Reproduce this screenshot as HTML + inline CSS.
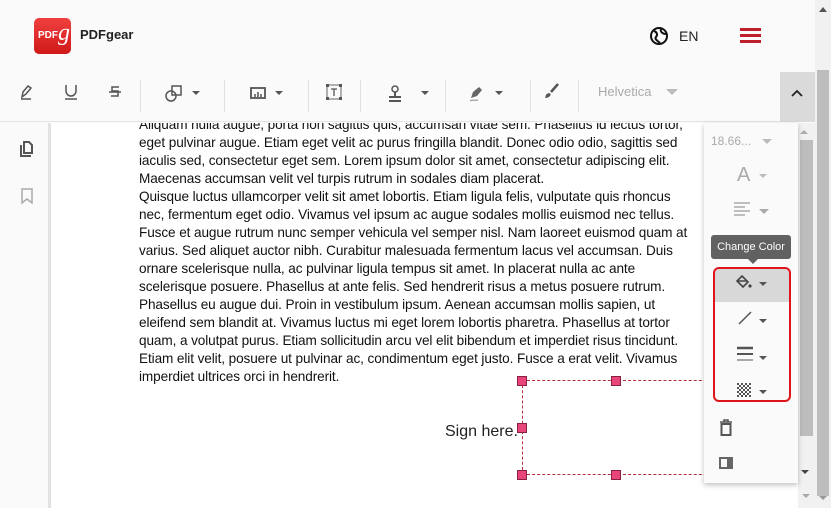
<!DOCTYPE html>
<html><head><meta charset="utf-8"><style>
*{box-sizing:border-box;margin:0;padding:0}
body{width:831px;height:508px;overflow:hidden;background:#fafafa;font-family:"Liberation Sans",sans-serif;position:relative}
.abs{position:absolute}
.txt{position:absolute;left:139px;top:116px;font-size:13.6px;line-height:18px;color:#111;white-space:nowrap;letter-spacing:-0.1px}
.caret{position:absolute;width:0;height:0;border-left:4px solid transparent;border-right:4px solid transparent;border-top:4px solid #555}
.sep{position:absolute;top:80px;width:1px;height:32px;background:#e0e0e0}
.h{position:absolute;width:10px;height:10px;background:#e8457a;border:1px solid #8a2040}
</style></head><body>
<div class="abs" style="left:0;top:0;width:815px;height:72px;background:#fafafa"></div>
<div class="abs" style="left:34px;top:18px;width:37px;height:36px;border-radius:5px;background:linear-gradient(#f04040,#d01818)"></div>
<div class="abs" style="left:38px;top:30px;color:#fff;font-size:10px;font-weight:bold">PDF</div>
<div class="abs" style="left:58px;top:20px;color:#fff;font-size:24px;font-style:italic;font-family:'Liberation Serif',serif">g</div>
<div class="abs" style="left:80px;top:27px;font-size:13px;font-weight:bold;color:#222">PDFgear</div>
<svg class="abs" style="left:649px;top:26px" width="20" height="20" viewBox="0 0 20 20"><circle cx="10" cy="10" r="8" fill="none" stroke="#111" stroke-width="2"/><path d="M5 5c3 1 4 4 2 6s2 4 4 6M12 3c-1 3 2 5 5 5" fill="none" stroke="#111" stroke-width="2"/></svg>
<div class="abs" style="left:679px;top:28px;font-size:14px;color:#222">EN</div>
<div class="abs" style="left:740px;top:28px;width:21px;height:3px;background:#c0202c"></div>
<div class="abs" style="left:740px;top:34px;width:21px;height:3px;background:#c0202c"></div>
<div class="abs" style="left:740px;top:40px;width:21px;height:3px;background:#c0202c"></div>
<div class="abs" style="left:0;top:72px;width:815px;height:50px;background:#fafafa;border-bottom:1px solid #e4e4e4"></div>
<svg class="abs" style="left:18px;top:83px" width="18" height="18" viewBox="0 0 18 18"><path d="M4 14l1-5 5-6 3 2-5 6z" fill="none" stroke="#555" stroke-width="1.5"/><path d="M3 16h10" stroke="#555" stroke-width="1.5"/></svg>
<svg class="abs" style="left:62px;top:83px" width="18" height="18" viewBox="0 0 18 18"><path d="M4 2v6a5 5 0 0 0 10 0V2" fill="none" stroke="#555" stroke-width="1.5"/><path d="M3 16h12" stroke="#555" stroke-width="1.5"/></svg>
<svg class="abs" style="left:106px;top:83px" width="18" height="18" viewBox="0 0 18 18"><path d="M13 4H6v4h6v5H5" fill="none" stroke="#555" stroke-width="1.5"/><path d="M3 9h12" stroke="#555" stroke-width="1.5"/></svg>
<div class="sep" style="left:140px"></div>
<svg class="abs" style="left:164px;top:83px" width="20" height="20" viewBox="0 0 20 20"><circle cx="7" cy="13" r="5" fill="none" stroke="#555" stroke-width="1.5"/><rect x="8" y="3" width="9" height="9" fill="none" stroke="#555" stroke-width="1.5"/></svg>
<div class="caret" style="left:192px;top:91px"></div>
<div class="sep" style="left:224px"></div>
<svg class="abs" style="left:249px;top:85px" width="18" height="16" viewBox="0 0 18 16"><rect x="2" y="3" width="14" height="10" fill="none" stroke="#555" stroke-width="1.8"/><path d="M6 12V9M9 12V7M12 12V9" stroke="#555" stroke-width="1.5"/></svg>
<div class="caret" style="left:275px;top:91px"></div>
<div class="sep" style="left:308px"></div>
<svg class="abs" style="left:324px;top:82px" width="20" height="20" viewBox="0 0 20 20"><rect x="3" y="3" width="14" height="14" fill="none" stroke="#666" stroke-width="1"/><path d="M7 7h6M10 7v7" stroke="#555" stroke-width="1.3"/><rect x="2" y="2" width="3" height="3" fill="#555"/><rect x="15" y="2" width="3" height="3" fill="#555"/><rect x="2" y="15" width="3" height="3" fill="#555"/><rect x="15" y="15" width="3" height="3" fill="#555"/></svg>
<div class="sep" style="left:360px"></div>
<svg class="abs" style="left:385px;top:83px" width="20" height="20" viewBox="0 0 20 20"><circle cx="10" cy="6" r="3" fill="none" stroke="#555" stroke-width="1.5"/><path d="M10 9v4M4 14h12M4 18h12" stroke="#555" stroke-width="2"/></svg>
<div class="caret" style="left:421px;top:91px"></div>
<div class="sep" style="left:445px"></div>
<svg class="abs" style="left:467px;top:83px" width="20" height="20" viewBox="0 0 20 20"><path d="M4 15l2-6 6-5 3 3-5 6z" fill="#666"/><path d="M3 18c3-2 5 0 8-1" fill="none" stroke="#888" stroke-width="1"/></svg>
<div class="caret" style="left:495px;top:91px"></div>
<div class="sep" style="left:530px"></div>
<svg class="abs" style="left:543px;top:82px" width="18" height="18" viewBox="0 0 18 18"><path d="M15 2L8 10" stroke="#555" stroke-width="2.5"/><path d="M4 12c2-2 5 0 3 2s-4 2-5 2c1-1 0-3 2-4z" fill="#555"/></svg>
<div class="sep" style="left:578px"></div>
<div class="abs" style="left:598px;top:84px;font-size:13px;color:#aaa">Helvetica</div>
<div class="caret" style="left:666px;top:89px;border-left-width:6px;border-right-width:6px;border-top:6px solid #bbb"></div>
<div class="abs" style="left:780px;top:72px;width:35px;height:50px;background:#dadada"></div>
<svg class="abs" style="left:790px;top:88px" width="14" height="10" viewBox="0 0 14 10"><path d="M2 8l5-5 5 5" fill="none" stroke="#222" stroke-width="1.8"/></svg>
<div class="abs" style="left:0;top:123px;width:48px;height:385px;background:#fafafa"></div>
<div class="abs" style="left:48px;top:123px;width:3px;height:385px;background:#e2e2e2"></div>
<svg class="abs" style="left:18px;top:140px" width="18" height="18" viewBox="0 0 18 18"><path d="M3 5v11h10" fill="none" stroke="#555" stroke-width="2"/><path d="M6 2h5l3 3v8H6z" fill="none" stroke="#555" stroke-width="2"/></svg>
<svg class="abs" style="left:19px;top:187px" width="16" height="18" viewBox="0 0 16 18"><path d="M3 2h10v14l-5-4-5 4z" fill="none" stroke="#aaa" stroke-width="1.5"/></svg>
<div class="abs" style="left:51px;top:123px;width:747px;height:385px;background:#fff;overflow:hidden">
<div class="txt" style="left:88px;top:-7px">
<div>Aliquam nulla augue, porta non sagittis quis, accumsan vitae sem. Phasellus id lectus tortor,</div>
<div>eget pulvinar augue. Etiam eget velit ac purus fringilla blandit. Donec odio odio, sagittis sed</div>
<div>iaculis sed, consectetur eget sem. Lorem ipsum dolor sit amet, consectetur adipiscing elit.</div>
<div>Maecenas accumsan velit vel turpis rutrum in sodales diam placerat.</div>
<div>Quisque luctus ullamcorper velit sit amet lobortis. Etiam ligula felis, vulputate quis rhoncus</div>
<div>nec, fermentum eget odio. Vivamus vel ipsum ac augue sodales mollis euismod nec tellus.</div>
<div>Fusce et augue rutrum nunc semper vehicula vel semper nisl. Nam laoreet euismod quam at</div>
<div>varius. Sed aliquet auctor nibh. Curabitur malesuada fermentum lacus vel accumsan. Duis</div>
<div>ornare scelerisque nulla, ac pulvinar ligula tempus sit amet. In placerat nulla ac ante</div>
<div>scelerisque posuere. Phasellus at ante felis. Sed hendrerit risus a metus posuere rutrum.</div>
<div>Phasellus eu augue dui. Proin in vestibulum ipsum. Aenean accumsan mollis sapien, ut</div>
<div>eleifend sem blandit at. Vivamus luctus mi eget lorem lobortis pharetra. Phasellus at tortor</div>
<div>quam, a volutpat purus. Etiam sollicitudin arcu vel elit bibendum et imperdiet risus tincidunt.</div>
<div>Etiam elit velit, posuere ut pulvinar ac, condimentum eget justo. Fusce a erat velit. Vivamus</div>
<div>imperdiet ultrices orci in hendrerit.</div>
</div>
</div>
<div class="abs" style="left:445px;top:423px;font-size:16px;color:#222">Sign here.</div>
<div class="abs" style="left:522px;top:380px;width:200px;height:95px;border:1px dashed #b03040"></div>
<div class="h" style="left:517px;top:376px"></div>
<div class="h" style="left:611px;top:376px"></div>
<div class="h" style="left:517px;top:423px"></div>
<div class="h" style="left:517px;top:470px"></div>
<div class="h" style="left:611px;top:470px"></div>
<div class="abs" style="left:798px;top:123px;width:17px;height:385px;background:#f1f1f1"></div>
<div class="abs" style="left:800px;top:140px;width:13px;height:296px;background:#bdbdbd"></div>
<div class="caret" style="left:802px;top:494px;border-top-color:#aaa"></div>
<div class="abs" style="left:815px;top:0;width:16px;height:508px;background:#f1f1f1"></div>
<div class="abs" style="left:817px;top:70px;width:12px;height:426px;background:#bdbdbd"></div>
<div class="abs" style="left:819px;top:7px;width:0;height:0;border-left:4px solid transparent;border-right:4px solid transparent;border-bottom:5px solid #555"></div>
<div class="caret" style="left:819px;top:496px;border-top-color:#999"></div>
<div class="abs" style="left:704px;top:123px;width:94px;height:360px;background:#fafafa;box-shadow:0 2px 5px rgba(0,0,0,.25)"></div>
<div class="abs" style="left:800px;top:130px;width:0;height:0;border-left:4px solid transparent;border-right:4px solid transparent;border-bottom:4px solid #aaa"></div>
<div class="caret" style="left:801px;top:470px;border-top-color:#444"></div>
<div class="abs" style="left:711px;top:134px;font-size:12px;color:#aaa">18.66...</div>
<div class="caret" style="left:762px;top:139px;border-left-width:5px;border-right-width:5px;border-top:5px solid #bbb"></div>
<div class="abs" style="left:737px;top:164px;font-size:20px;color:#aaa">A</div>
<div class="caret" style="left:759px;top:174px;border-top-color:#bbb"></div>
<svg class="abs" style="left:733px;top:201px" width="18" height="16" viewBox="0 0 18 16"><path d="M1 2h16M1 6h11M1 10h16M1 14h11" stroke="#aaa" stroke-width="1.6"/></svg>
<div class="caret" style="left:759px;top:209px;border-left-width:5px;border-right-width:5px;border-top:5px solid #aaa"></div>
<div class="abs" style="left:711px;top:235px;width:80px;height:24px;background:#616161;border-radius:3px;color:#fff;font-size:11px;line-height:24px;text-align:center">Change Color</div>
<div class="abs" style="left:748px;top:259px;width:0;height:0;border-left:5px solid transparent;border-right:5px solid transparent;border-top:5px solid #616161"></div>
<div class="abs" style="left:713px;top:268px;width:77px;height:34px;background:#d8d8d8;border-radius:6px 6px 0 0"></div>
<div class="abs" style="left:713px;top:267px;width:78px;height:135px;border:2px solid #e0151c;border-radius:6px"></div>
<svg class="abs" style="left:735px;top:274px" width="18" height="16" viewBox="0 0 18 16"><path d="M7 2l6 6-5 5-6-6z" fill="none" stroke="#444" stroke-width="1.6"/><path d="M3 7h9" stroke="#444" stroke-width="1.5"/><circle cx="15" cy="12" r="1.6" fill="#444"/></svg>
<div class="caret" style="left:759px;top:282px"></div>
<svg class="abs" style="left:737px;top:310px" width="16" height="16" viewBox="0 0 16 16"><path d="M2 14L14 2" stroke="#555" stroke-width="1.5"/></svg>
<div class="caret" style="left:759px;top:319px"></div>
<svg class="abs" style="left:736px;top:346px" width="18" height="16" viewBox="0 0 18 16"><path d="M1 2h16" stroke="#555" stroke-width="2.5"/><path d="M1 8h16" stroke="#555" stroke-width="2"/><path d="M1 14h16" stroke="#555" stroke-width="1"/></svg>
<div class="caret" style="left:759px;top:356px"></div>
<svg class="abs" style="left:737px;top:383px" width="14" height="14" viewBox="0 0 14 14"><pattern id="p" width="4" height="4" patternUnits="userSpaceOnUse"><rect width="2" height="2" fill="#555"/><rect x="2" y="2" width="2" height="2" fill="#555"/></pattern><rect width="14" height="14" fill="url(#p)"/></svg>
<div class="caret" style="left:759px;top:390px"></div>
<svg class="abs" style="left:718px;top:419px" width="16" height="18" viewBox="0 0 16 18"><path d="M2 3h12M6 3V1h4v2" stroke="#555" stroke-width="1.6" fill="none"/><rect x="3.5" y="5" width="9" height="11" fill="none" stroke="#555" stroke-width="2"/></svg>
<svg class="abs" style="left:718px;top:455px" width="16" height="16" viewBox="0 0 16 16"><rect x="1" y="2" width="14" height="12" fill="#666"/><rect x="3" y="4" width="6" height="8" fill="#fafafa"/></svg>
</body></html>
